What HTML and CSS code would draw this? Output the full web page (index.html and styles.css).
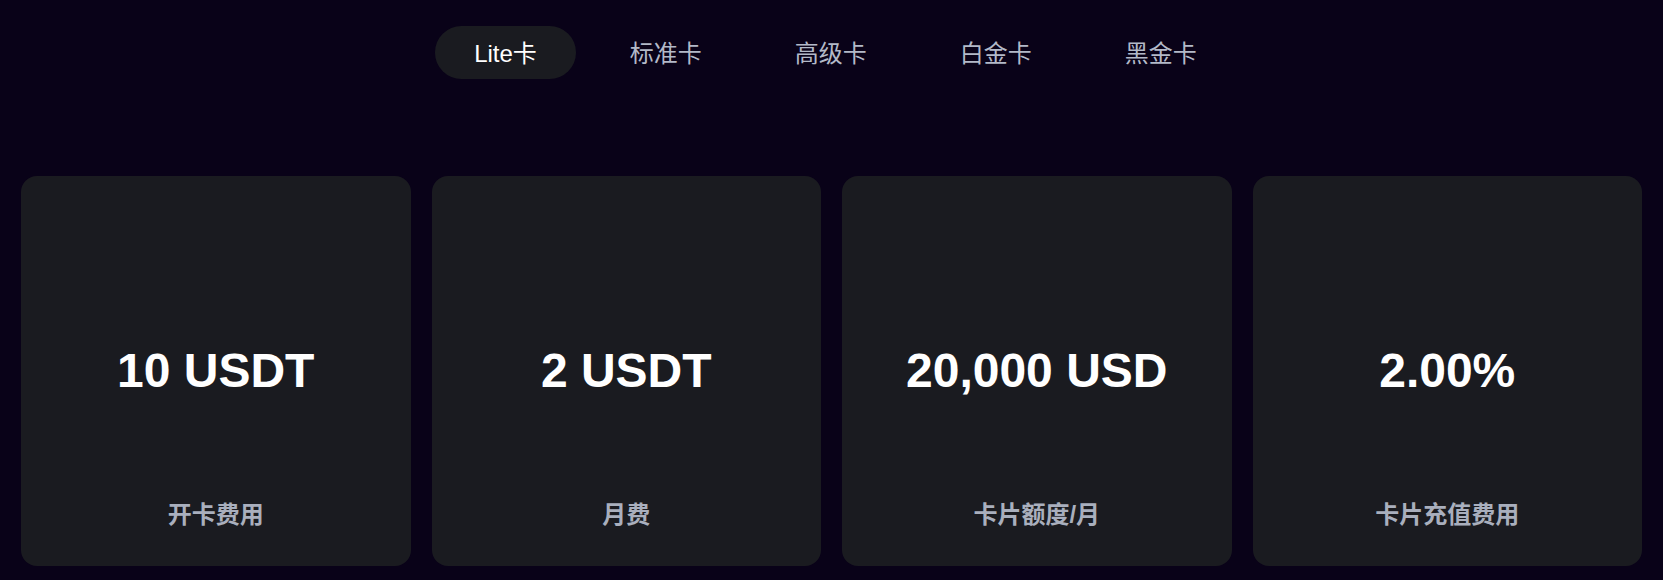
FILE: index.html
```html
<!DOCTYPE html>
<html>

<head>
    <title>Card Plans</title>
    <link rel="stylesheet" href="styles.css">
</head>

<body>
    <nav class="tabs">
        <button type="button" class="tab active">Lite卡</button>
        <button type="button" class="tab">标准卡</button>
        <button type="button" class="tab">高级卡</button>
        <button type="button" class="tab">白金卡</button>
        <button type="button" class="tab">黑金卡</button>
    </nav>

    <section class="stats">
        <div class="stat">
            <div class="value">10 USDT</div>
            <div class="label">开卡费用</div>
        </div>
        <div class="stat">
            <div class="value">2 USDT</div>
            <div class="label">月费</div>
        </div>
        <div class="stat">
            <div class="value">20,000 USD</div>
            <div class="label">卡片额度/月</div>
        </div>
        <div class="stat">
            <div class="value">2.00%</div>
            <div class="label">卡片充值费用</div>
        </div>
    </section>
</body>

</html>
```

FILE: styles.css
```css
body {
    margin: 0;
    background-color: #090218;
    font-family: "Liberation Sans", "Noto Sans CJK SC", sans-serif;
    color: #ffffff;
}

.tabs {
    display: flex;
    justify-content: center;
    gap: 15px;
    padding-top: 26px;
    padding-left: 8px;
}

.tab {
    height: 53px;
    padding: 2px 39px 0;
    border: none;
    border-radius: 27px;
    background: transparent;
    color: #b3b9c8;
    font-family: inherit;
    font-size: 24px;
    line-height: 24px;
    cursor: pointer;
}

.tab.active {
    background-color: #1a1b20;
    color: #ffffff;
}

.stats {
    display: grid;
    grid-template-columns: repeat(4, 1fr);
    gap: 21px;
    padding: 97px 21px 14px;
}

.stat {
    position: relative;
    height: 390px;
    border-radius: 16px;
    background-color: #1a1b20;
    display: flex;
    align-items: center;
    justify-content: center;
}

.value {
    font-size: 48px;
    line-height: 48px;
    font-weight: 700;
}

.label {
    position: absolute;
    left: 0;
    right: 0;
    bottom: 39px;
    text-align: center;
    font-size: 24px;
    line-height: 24px;
    font-weight: 700;
    color: #a9afbd;
}
```
